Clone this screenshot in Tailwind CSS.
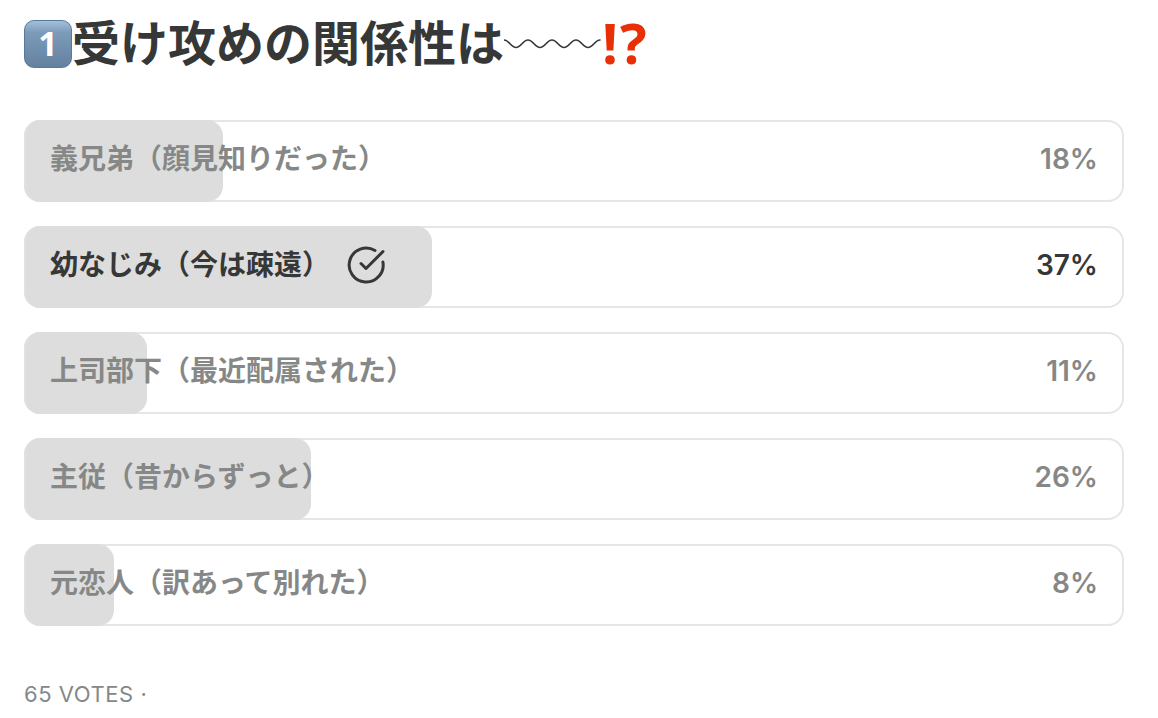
<!DOCTYPE html>
<html lang="ja">
<head>
<meta charset="utf-8">
<meta name="viewport" content="width=device-width, initial-scale=1">
<title>Poll</title>
<script src="https://cdn.jsdelivr.net/npm/@tailwindcss/browser@4"></script>
</head>
<body class="bg-white pl-6 pr-[34px] pt-4 font-['Inter','Noto_Sans_CJK_JP',sans-serif] text-[#363737]">
<main>
  <h1 class="flex h-14 items-center text-5xl font-bold leading-none">
    <span class="flex size-12 shrink-0 items-center justify-center rounded-[10px] border border-[#58799a] bg-linear-to-b from-[#a3c0dc] via-[#7c9bb9] via-25% to-[#6481a0] pb-0.5 font-['Noto_Sans',sans-serif] text-[34px] font-bold text-white">1</span>
    <span class="whitespace-nowrap">受け攻めの関係性は</span>
    <svg class="h-4 w-[98px] shrink-0" viewBox="0 0 98 16" fill="none" stroke="#363737" stroke-width="1.6" stroke-linecap="round" aria-label="〰〰"><path d="M0 4C5 4 7 11.500 12 11.500S19 4 24 4S31 11.500 36 11.500S43 4 48 4S55 11.500 60 11.500S67 4 72 4S79 11.500 84 11.500S91 4 96 4"/></svg>
    <span class="flex gap-0.5 pb-1 font-['Open_Sans',sans-serif] text-[56px] font-bold text-[#e92f05]"><span>!</span><span>?</span></span>
  </h1>
  <ul class="mt-12 flex flex-col gap-6 text-[28px] font-bold leading-10 text-[#868887]">
    <li><button class="relative flex min-h-[82px] w-full items-center justify-between rounded-2xl border-2 border-[#e6e6e6] px-6 pb-1 text-left">
      <span class="absolute -inset-y-0.5 -left-0.5 rounded-2xl border-l-2 border-[#e1e1e1] bg-[#dddddd]" style="width:calc(18% + 2px)"></span>
      <span class="relative">義兄弟（顔見知りだった）</span><span class="relative font-semibold">18%</span></button></li>
    <li><button class="relative flex min-h-[82px] w-full items-center justify-between rounded-2xl border-2 border-[#e6e6e6] px-6 pb-1 text-left text-[#363737]">
      <span class="absolute -inset-y-0.5 -left-0.5 rounded-2xl border-l-2 border-[#e1e1e1] bg-[#dddddd]" style="width:calc(37% + 2px)"></span>
      <span class="relative flex items-center gap-4"><span>幼なじみ（今は疎遠）</span><svg class="size-10" viewBox="0 0 40 40" fill="none" stroke="#363737" stroke-width="3" stroke-linecap="round" stroke-linejoin="round" aria-label="選択済み"><path d="M29 5.500A17 17 0 1 0 36.900 17"/><path d="M15 18.500L20 23.500L37 6.500"/></svg></span><span class="relative font-semibold">37%</span></button></li>
    <li><button class="relative flex min-h-[82px] w-full items-center justify-between rounded-2xl border-2 border-[#e6e6e6] px-6 pb-1 text-left">
      <span class="absolute -inset-y-0.5 -left-0.5 rounded-2xl border-l-2 border-[#e1e1e1] bg-[#dddddd]" style="width:calc(11% + 2px)"></span>
      <span class="relative">上司部下（最近配属された）</span><span class="relative font-semibold">11%</span></button></li>
    <li><button class="relative flex min-h-[82px] w-full items-center justify-between rounded-2xl border-2 border-[#e6e6e6] px-6 pb-1 text-left">
      <span class="absolute -inset-y-0.5 -left-0.5 rounded-2xl border-l-2 border-[#e1e1e1] bg-[#dddddd]" style="width:calc(26% + 2px)"></span>
      <span class="relative">主従（昔からずっと）</span><span class="relative font-semibold">26%</span></button></li>
    <li><button class="relative flex min-h-[82px] w-full items-center justify-between rounded-2xl border-2 border-[#e6e6e6] px-6 pb-1 text-left">
      <span class="absolute -inset-y-0.5 -left-0.5 rounded-2xl border-l-2 border-[#e1e1e1] bg-[#dddddd]" style="width:calc(8% + 2px)"></span>
      <span class="relative">元恋人（訳あって別れた）</span><span class="relative font-semibold">8%</span></button></li>
  </ul>
  <p class="mt-[52px] text-[22px] leading-8 tracking-wide text-[#868887]">65 VOTES ·</p>
</main>
</body>
</html>
